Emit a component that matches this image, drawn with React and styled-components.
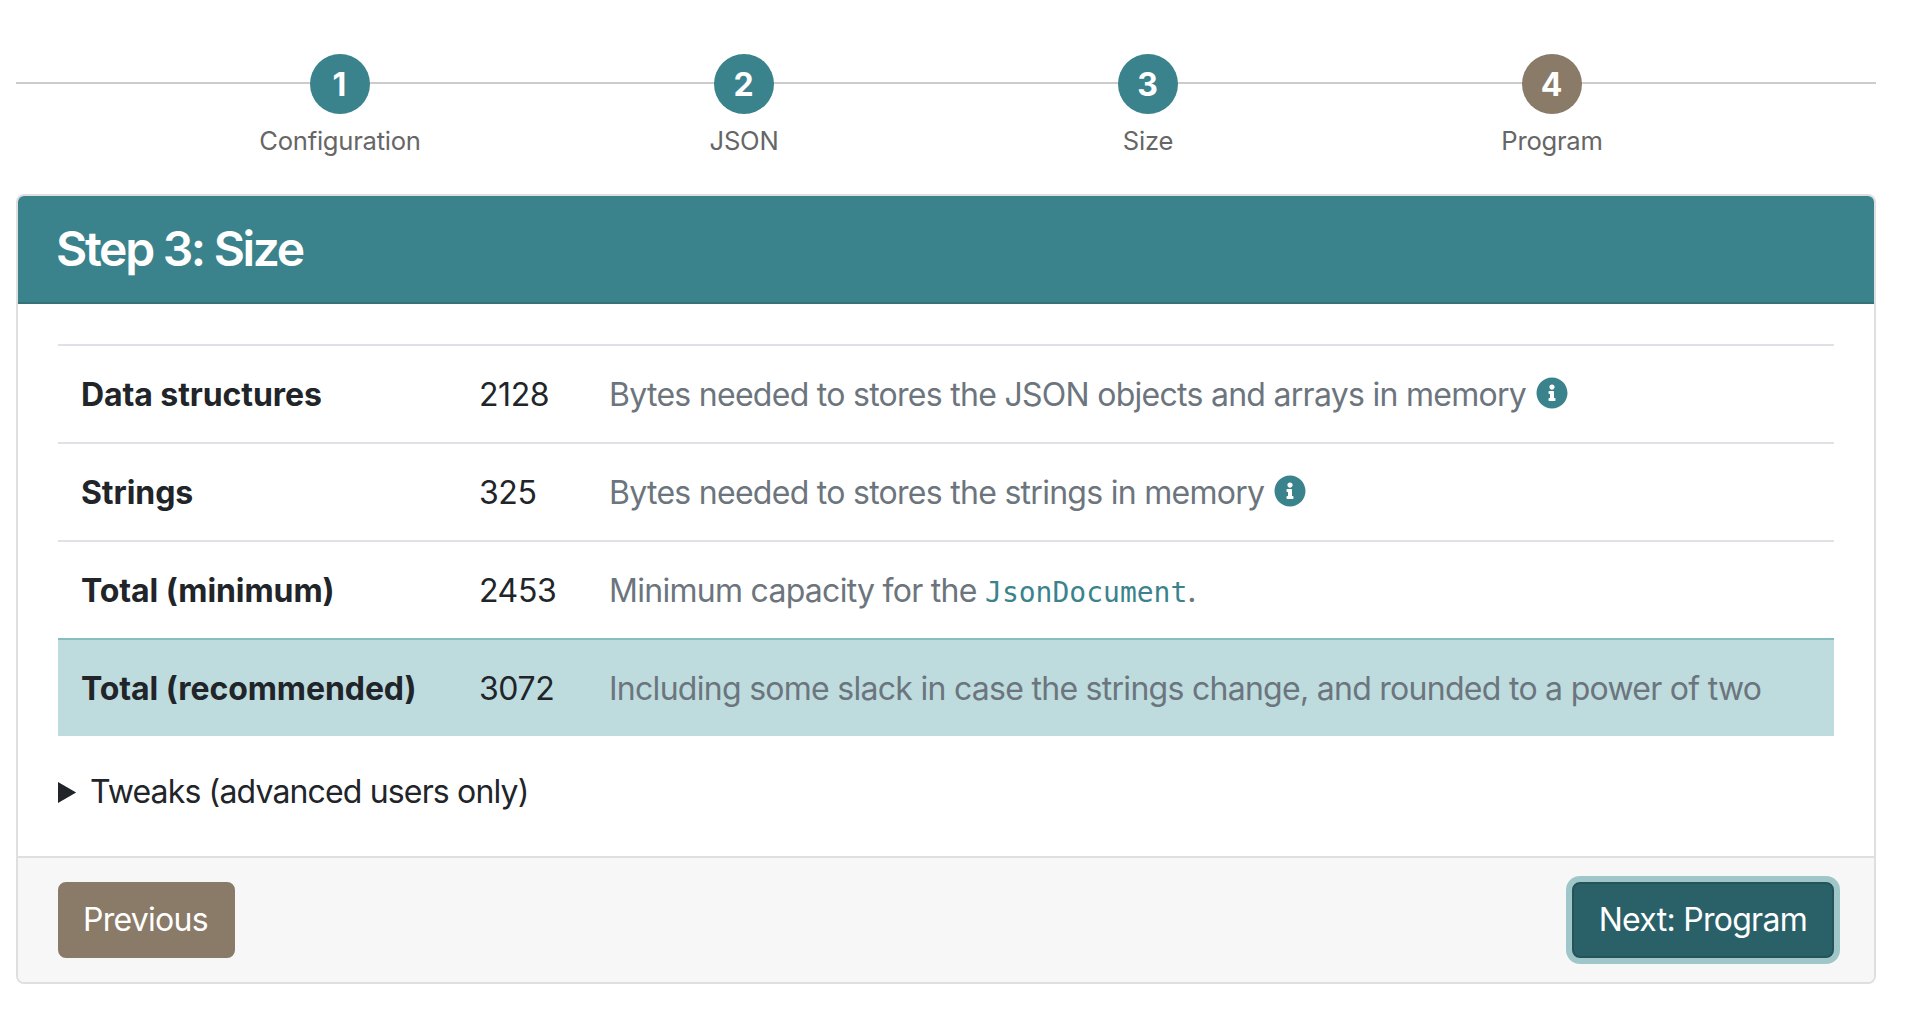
import React from 'react';
import styled, { createGlobalStyle } from 'styled-components';
import { FaInfoCircle } from 'react-icons/fa';

const teal = '#3b838c';
const taupe = '#8a7a68';

const GlobalStyle = createGlobalStyle`
  * { box-sizing: border-box; }
  body {
    margin: 0;
    background: #fff;
    color: #212529;
    font-family: Inter, "Liberation Sans", sans-serif;
    font-size: 32px;
    line-height: 1.5;
    letter-spacing: -0.72px;
  }
`;

const Styled = {
  Page: styled.div`
    padding: 54px 30px 0 16px;
  `,
  Stepper: styled.ol`
    position: relative;
    display: flex;
    justify-content: center;
    list-style: none;
    margin: 0 0 34px;
    padding: 0;
    &::before {
      content: '';
      position: absolute;
      left: 0;
      right: 0;
      top: 28px;
      height: 2px;
      background: #cccccc;
    }
  `,
  Step: styled.li`
    position: relative;
    width: 404px;
    display: flex;
    flex-direction: column;
    align-items: center;
  `,
  Bullet: styled.span`
    width: 60px;
    height: 60px;
    padding: 2px 1px 0 0;
    border-radius: 50%;
    display: flex;
    align-items: center;
    justify-content: center;
    color: #fff;
    font-size: 32px;
    font-weight: 700;
    line-height: 1;
    letter-spacing: 0;
    background: ${props => (props.$pending ? taupe : teal)};
  `,
  StepLabel: styled.span`
    margin-top: 8px;
    font-size: 25.6px;
    line-height: 38px;
    letter-spacing: -0.25px;
    color: #666666;
  `,
  Card: styled.section`
    border: 2px solid #dfdfdf;
    border-radius: 8px;
    overflow: hidden;
  `,
  CardHeader: styled.header`
    padding: 24px 40px;
    background: ${teal};
    border-bottom: 2px solid #357177;
  `,
  Title: styled.h4`
    margin: 0 0 0 -2px;
    color: #fff;
    font-size: 48px;
    font-weight: 600;
    line-height: 1.2;
    letter-spacing: -2.3px;
  `,
  CardBody: styled.div`
    padding: 40px;
  `,
  Table: styled.table`
    width: 100%;
    margin-bottom: 32px;
    border-collapse: separate;
    border-spacing: 0;
  `,
  Row: styled.tr`
    background: ${props => (props.$highlight ? '#bedcde' : 'transparent')};
    & > * {
      border-top: 2px solid ${props => (props.$highlight ? '#86bcc2' : '#dee2e6')};
      height: 98px;
      padding: 25px 24px 0;
      line-height: 48px;
      text-align: left;
      vertical-align: top;
    }
  `,
  Name: styled.th`
    width: 397px;
    font-weight: 700;
    letter-spacing: -0.08px;
    && {
      padding-left: 23px;
    }
  `,
  Value: styled.td`
    width: 130px;
    letter-spacing: -0.4px;
  `,
  Description: styled.td`
    color: #6c757d;
  `,
  Code: styled.code`
    font-family: "DejaVu Sans Mono", "Liberation Mono", monospace;
    font-size: 28px;
    line-height: 1;
    letter-spacing: 0;
    color: ${teal};
  `,
  Info: styled(FaInfoCircle)`
    margin-left: 10px;
    color: ${teal};
    font-size: 32px;
    vertical-align: -3px;
  `,
  Tweaks: styled.details`
    height: 48px;
    letter-spacing: -0.85px;
  `,
  TweaksLabel: styled.span`
    margin-left: -2px;
  `,
  Footer: styled.footer`
    display: flex;
    justify-content: space-between;
    padding: 24px 40px;
    background: #f7f7f7;
    border-top: 2px solid #dfdfdf;
  `,
  Button: styled.button`
    height: 76px;
    padding: ${props => (props.$primary ? '0 25px' : '0 25px 0 23px')};
    border: 2px solid ${props => (props.$primary ? '#255357' : taupe)};
    border-radius: 8px;
    color: #fff;
    font: inherit;
    letter-spacing: inherit;
    background: ${props => (props.$primary ? '#2a6168' : taupe)};
    box-shadow: ${props => (props.$primary ? '0 0 0 6px #9fc7ca' : 'none')};
  `,
};

const steps = [
  { number: 1, label: 'Configuration' },
  { number: 2, label: 'JSON' },
  { number: 3, label: 'Size' },
  { number: 4, label: 'Program', pending: true },
];

function App() {
  return (
    <Styled.Page>
      <GlobalStyle />
      <Styled.Stepper>
        {steps.map((step) => (
          <Styled.Step key={step.number}>
            <Styled.Bullet $pending={step.pending}>{step.number}</Styled.Bullet>
            <Styled.StepLabel>{step.label}</Styled.StepLabel>
          </Styled.Step>
        ))}
      </Styled.Stepper>
      <Styled.Card>
        <Styled.CardHeader>
          <Styled.Title>Step 3: Size</Styled.Title>
        </Styled.CardHeader>
        <Styled.CardBody>
          <Styled.Table>
            <tbody>
              <Styled.Row>
                <Styled.Name>Data structures</Styled.Name>
                <Styled.Value>2128</Styled.Value>
                <Styled.Description>
                  Bytes needed to stores the JSON objects and arrays in memory
                  <Styled.Info />
                </Styled.Description>
              </Styled.Row>
              <Styled.Row>
                <Styled.Name>Strings</Styled.Name>
                <Styled.Value>325</Styled.Value>
                <Styled.Description>
                  Bytes needed to stores the strings in memory
                  <Styled.Info />
                </Styled.Description>
              </Styled.Row>
              <Styled.Row>
                <Styled.Name>Total (minimum)</Styled.Name>
                <Styled.Value>2453</Styled.Value>
                <Styled.Description>
                  Minimum capacity for the <Styled.Code>JsonDocument</Styled.Code>.
                </Styled.Description>
              </Styled.Row>
              <Styled.Row $highlight>
                <Styled.Name>Total (recommended)</Styled.Name>
                <Styled.Value>3072</Styled.Value>
                <Styled.Description>
                  Including some slack in case the strings change, and rounded to a power of two
                </Styled.Description>
              </Styled.Row>
            </tbody>
          </Styled.Table>
          <Styled.Tweaks>
            <summary>
              <Styled.TweaksLabel>Tweaks (advanced users only)</Styled.TweaksLabel>
            </summary>
          </Styled.Tweaks>
        </Styled.CardBody>
        <Styled.Footer>
          <Styled.Button>Previous</Styled.Button>
          <Styled.Button $primary>Next: Program</Styled.Button>
        </Styled.Footer>
      </Styled.Card>
    </Styled.Page>
  );
}

export default App;
